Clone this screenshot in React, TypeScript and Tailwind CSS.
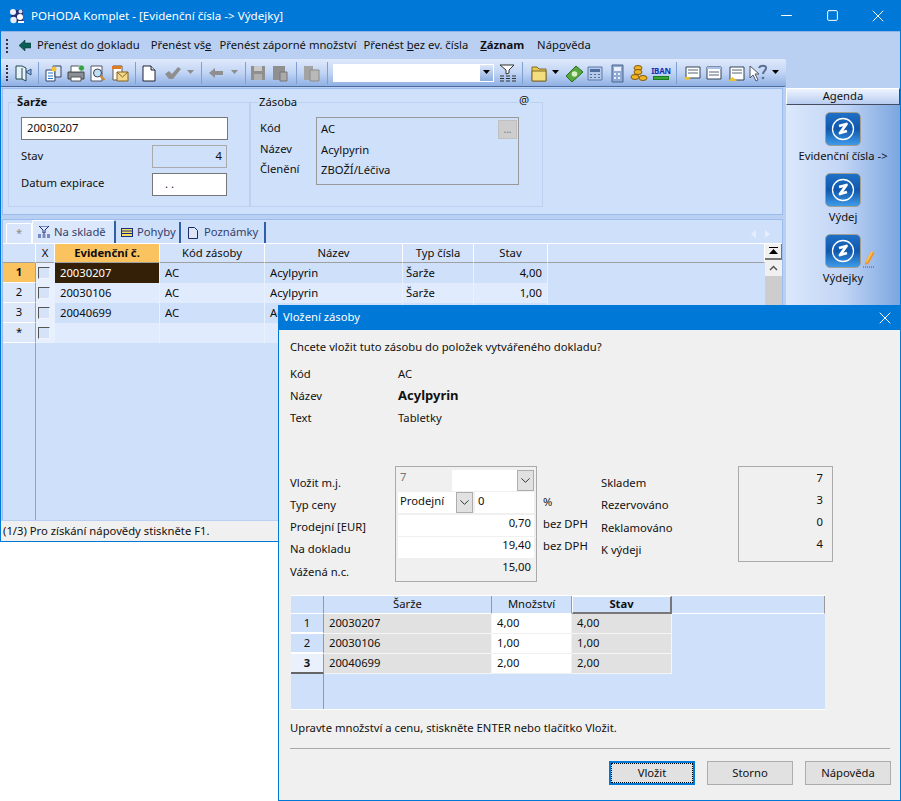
import type { ReactNode } from 'react'
import { ChevronDown, Minus, Square, X } from 'lucide-react'

const sep = <div className="w-px h-[22px] mx-[4px] bg-[#f4f8ff] border-l border-[#7f9fd0]" />

function Ic({ w = 22, children }: { w?: number; children: ReactNode }) {
  return (
    <svg width={w} height="20" viewBox={`0 0 ${w} 20`} className="shrink-0">
      {children}
    </svg>
  )
}

function Caret({ color = '#000' }: { color?: string }) {
  return (
    <svg width="9" height="5" viewBox="0 0 9 5" className="shrink-0 mx-[2px]">
      <path d="M1 0h7L4.500 4z" fill={color} />
    </svg>
  )
}

function ZIcon() {
  return (
    <div className="w-[36px] h-[34px] rounded-[5px] border border-[#a09f92] bg-gradient-to-b from-[#1f70c6] via-[#1058ad] to-[#3f9be8] flex items-center justify-center">
      <svg width="26" height="26" viewBox="0 0 26 26">
        <circle cx="13" cy="13" r="10.500" fill="none" stroke="#fff" strokeWidth="1.300" />
        <path d="M9 10l7.500-2L10 17l7-2" fill="none" stroke="#fff" strokeWidth="2.800" strokeLinejoin="round" />
      </svg>
    </div>
  )
}

function Group({ title, bold, className, children }: { title: string; bold?: boolean; className: string; children: ReactNode }) {
  return (
    <fieldset className={`border border-[#bcd0f0] h-[110px] ${className}`}>
      <legend className={`ml-[7px] px-[1px] leading-[10px] ${bold ? 'font-bold' : ''}`}>{title}</legend>
      {children}
    </fieldset>
  )
}

const stockRows = [
  { n: '1', code: '20030207', stav: '4,00' },
  { n: '2', code: '20030106', stav: '1,00' },
  { n: '3', code: '20040699', stav: '' },
  { n: '*', code: '', stav: '' },
]

function StockGrid() {
  const head = 'h-[19px] bg-[#d3e2fb] border-r border-b border-r-white border-b-[#a0a0a0] flex items-center justify-center'
  return (
    <div className="flex-1 bg-[#cfe0fa] flex text-[#0d0d0d]">
      <div className="w-[762px]">
        <div className="grid grid-cols-[33px_19px_105px_105px_138px_71px_74px_1fr]">
          <div className={head} />
          <div className={head}>X</div>
          <div className="h-[19px] bg-[#fbc35f] border-r border-b border-r-white border-b-[#a0a0a0] flex items-center justify-center font-bold">Evidenční č.</div>
          <div className={head}>Kód zásoby</div>
          <div className={head}>Název</div>
          <div className={head}>Typ čísla</div>
          <div className={head}>Stav</div>
          <div className={head} />
          {stockRows.map((r, i) => {
            const cellBg = i % 2 === 0 ? 'bg-[#cfe0fa]' : 'bg-[#e0ebfd]'
            const cell = `h-[20px] ${cellBg} border-r border-[#eaf1fd] flex items-center pl-[5px]`
            const filled = r.n !== '*'
            return (
              <div key={r.n} className="contents">
                <div className={`h-[20px] ${i === 0 ? 'bg-[#fbc35f] font-bold' : 'bg-[#dde9fb]'} border-b border-r border-b-white border-r-[#a0a0a0] flex items-center justify-center`}>{r.n}</div>
                <div className="h-[20px] flex items-center pl-[2px] bg-[#e8f0fd]">
                  <div className="w-[12px] h-[12px] border border-[#eef3fc] border-l-[#555] border-t-[#555] bg-[#d5e2f8]" />
                </div>
                <div className={`${cell} ${i === 0 ? '!bg-[#342006] text-white' : ''}`}>{r.code}</div>
                <div className={cell}>{filled ? 'AC' : ''}</div>
                <div className={cell}>{filled ? 'Acylpyrin' : ''}</div>
                <div className={`${cell} !pl-[3px]`}>{filled ? 'Šarže' : ''}</div>
                <div className={`${cell} justify-end pr-[5px]`}>{r.stav}</div>
                <div />
              </div>
            )
          })}
        </div>
        <div className="h-[177px] w-[33px] border-r border-[#a0a0a0]" />
      </div>
      <div className="flex-1 bg-[#f0f0f0] flex flex-col">
        <div className="h-[16px] bg-[#f0f0f0] border-b-2 border-r border-[#777] flex items-center justify-center">
          <svg width="9" height="8" viewBox="0 0 9 8"><path d="M0 0h9v1H0zM4.500 2L9 7H0z" /></svg>
        </div>
        <div className="h-[16px] flex items-center justify-center">
          <svg width="9" height="6" viewBox="0 0 9 6"><path d="M1 5l3.500-3.500L8 5" fill="none" stroke="#555" strokeWidth="1.500" /></svg>
        </div>
        <div className="flex-1 bg-[#cdcdcd]" />
      </div>
    </div>
  )
}

function MainWindow() {
  return (
    <div className="w-[901px] h-[542px] border border-[#0078d7] border-t-0 flex flex-col bg-[#b9d0f3]">
      {/* title bar */}
      <div className="h-[31px] -mx-px bg-[#0078d7] text-white flex items-center shrink-0">
        <svg width="16" height="16" viewBox="0 0 16 16" className="ml-[9px] mr-[6px]">
          <path d="M2 2h12v12H2z" fill="#26306e" />
          <circle cx="4" cy="4" r="3" fill="#eef2fb" />
          <circle cx="11.500" cy="3.500" r="2" fill="#cfdcf5" />
          <circle cx="4.500" cy="12" r="3.200" fill="#e4eaf8" />
          <circle cx="11" cy="9" r="3" fill="#fff" />
          <path d="M9 13h6v2H9z" fill="#fff" />
        </svg>
        <span className="text-[11.6px]">POHODA Komplet - [Evidenční čísla -&gt; Výdejky]</span>
        <div className="ml-auto flex items-center">
          <div className="w-[46px] flex justify-center"><Minus size={17} strokeWidth={1} absoluteStrokeWidth /></div>
          <div className="w-[46px] flex justify-center"><Square size={13} strokeWidth={1} absoluteStrokeWidth /></div>
          <div className="w-[46px] flex justify-center"><X size={20} strokeWidth={1} absoluteStrokeWidth /></div>
        </div>
      </div>
      {/* menu */}
      <div className="h-[28px] shrink-0 flex items-center border-t border-[#8fb4e8]">
        <div className="ml-[5px] w-[2px] h-[14px] border-l-2 border-dotted border-[#334]" />
        <svg width="12" height="11" viewBox="0 0 12 11" className="ml-[11px] mr-[6px]"><path d="M0 5.500L6 0v3h6v5H6v3z" fill="#0b5d57" stroke="#0a2c2a" strokeWidth=".5" /></svg>
        <div className="flex text-[#111]">
          <span className="mr-[11px]">Přenést do <u>d</u>okladu</span>
          <span className="mr-[8px]">Přenést vš<u>e</u></span>
          <span className="mr-[7px]">Přenést záporné množství</span>
          <span className="mr-[12px]">Přenést <u>b</u>ez ev. čísla</span>
          <span className="mr-[13px] font-bold"><u>Z</u>áznam</span>
          <span>Náp<u>o</u>věda</span>
        </div>
      </div>
      {/* toolbar */}
      <div className="h-[28px] w-[785px] shrink-0 rounded-r-[2px] bg-gradient-to-b from-[#dfe9fb] via-[#c2d5f5] to-[#8fb0e4] border-b border-[#4c6a9c] flex items-center">
        <div className="ml-[5px] mr-[6px] w-[2px] h-[16px] border-l-2 border-dotted border-[#334]" />
        <Ic w={20}><path d="M2 3h6l4 2v13l-4-2H2zM8 5v11" fill="#e8f0fc" stroke="#1f4a4a" /><path d="M12 9l5-3v6z" fill="#8fb4ee" stroke="#33527f" /></Ic>
        {sep}
        <Ic><path d="M3 7h9v11H3z" fill="#fff" stroke="#346" /><path d="M10 3h8v11h-6V7h-2z" fill="#dde8fa" stroke="#346" /><path d="M5 10h5M5 13h5M5 15.500h5" stroke="#27c" /><circle cx="11" cy="6" r="2.500" fill="#f2c230" /></Ic>
        <Ic><path d="M3 9h16v7H3z" fill="#8a8f98" stroke="#444" /><path d="M6 3h10v6H6zM6 14h10v4H6z" fill="#fff" stroke="#555" /><circle cx="16.500" cy="5" r="3" fill="#35a04a" stroke="#fff" strokeWidth=".5" /></Ic>
        <Ic><path d="M4 3h11v15H4z" fill="#fff" stroke="#556" /><circle cx="10.500" cy="10" r="4" fill="#bfe0f5" stroke="#345" /><path d="M13.500 13l4 4" stroke="#c8892a" strokeWidth="2.200" /></Ic>
        <Ic><path d="M4 3h9v14H4z" fill="#fff" stroke="#654" /><path d="M3 3h9v3H3z" fill="#e07a20" /><path d="M8 9h11v9H8z" fill="#f5d98a" stroke="#86631f" /><path d="M8 9l5.500 5 5.500-5" fill="none" stroke="#86631f" /></Ic>
        {sep}
        <Ic><path d="M3 3h8l4 4v11H3z" fill="#fff" stroke="#223" /><path d="M11 3v4h4" fill="#cde" stroke="#223" /></Ic>
        <Ic><path d="M3 11l4-3 3 3 6-7 3 2-8 10H7z" fill="#8f8f8f" /></Ic>
        <Caret color="#8d8d8d" />
        {sep}
        <Ic><path d="M3 10l6-5v3h8v4H9v3z" fill="#8f8f8f" /></Ic>
        <Caret color="#8d8d8d" />
        {sep}
        <Ic><path d="M1 3h14v14H1z" fill="#8f8f8f" /><path d="M4 3h8v5H4z" fill="#c9c9c9" /><path d="M4 11h8v6H4z" fill="#b0b0b0" /></Ic>
        <Ic w={20}><path d="M1 3h12v14H1z" fill="#8f8f8f" /><path d="M8 9h7v9H8z" fill="#aaa" stroke="#777" /></Ic>
        {sep}
        <Ic><path d="M3 3h9v14H3z" fill="#a3a3a3" /><path d="M9 7h9v11H9z" fill="#b9b9b9" stroke="#8a8a8a" /></Ic>
        {sep}
        <div className="w-[161px] h-[18px] ml-px bg-white flex justify-end">
          <div className="w-[13px] h-[16px] m-px bg-gradient-to-b from-[#dce7f9] to-[#8dadde] flex items-center justify-center"><Caret /></div>
        </div>
        <div className="ml-[4px]"><Ic w={20}><path d="M2 2h14l-5 5v3l-3 1V7z" fill="#fff" stroke="#333" /><path d="M2 13h4M8 13h4M14 13h4M2 15.500h4M8 15.500h4M14 15.500h4M2 18h4M8 18h4M14 18h4" stroke="#333" /></Ic></div>
        {sep}
        <Ic><path d="M5 4h5l2 2h7v12H5z" fill="#e9c94d" stroke="#7d6a2a" /><path d="M5 8h14v10H5z" fill="#f4dd7f" stroke="#7d6a2a" /></Ic>
        <Caret />
        <Ic><path d="M4 13L14 3l7 6-11 10z" fill="#55a83c" stroke="#2e6b22" /><circle cx="12.500" cy="11" r="2.800" fill="#d9f0c5" /></Ic>
        <Ic><path d="M4 4h14v13H4z" fill="#b7c9e8" stroke="#5a78a8" /><path d="M6 6h10v3H6zM6 11h2v1H6zM10 11h2v1h-2zM14 11h2v1h-2zM6 14h2v1H6zM10 14h2v1h-2zM14 14h2v1h-2z" fill="#4f6fa0" /></Ic>
        <Ic><path d="M6 2h11v17H6z" fill="#8fa9d2" stroke="#4b6690" /><path d="M8 4h7v4H8zM8 10h2v2H8zM12 10h2v2h-2zM8 14h2v2H8zM12 14h2v2h-2z" fill="#eaf0fb" /></Ic>
        <Ic><ellipse cx="10" cy="5" rx="4" ry="2.500" fill="#f0b429" stroke="#8a5a00" /><ellipse cx="10" cy="9" rx="4" ry="2.500" fill="#f0b429" stroke="#8a5a00" /><ellipse cx="7" cy="14" rx="4" ry="2.500" fill="#f0b429" stroke="#8a5a00" /><ellipse cx="15" cy="15" rx="4" ry="2.500" fill="#f0b429" stroke="#8a5a00" /></Ic>
        <div className="w-[22px] flex flex-col items-center text-[#1530b0] text-[8px] font-bold leading-[9px] tracking-tight">
          IBAN
          <div className="w-[16px] h-[4px] mt-px bg-[#3aa63a] border border-[#1c7a1c]" />
        </div>
        {sep}
        <Ic><path d="M5 4h14v11H5z" fill="#fff" stroke="#345" /><path d="M7 7h10M7 10h10" stroke="#567" /><path d="M3 14h7l-3.500 4z" fill="#e9c22d" /></Ic>
        <Ic><path d="M4 4h14v12H4z" fill="#fff" stroke="#345" /><path d="M4 4h14v2H4z" fill="#a9c1e8" /><path d="M6 9h10M6 12h10" stroke="#567" /></Ic>
        <Ic><path d="M5 4h14v13H5z" fill="#fff" stroke="#345" /><path d="M7 7h10M7 10h10" stroke="#567" /><path d="M3 18h9l-4.500-4z" fill="#e9c22d" /></Ic>
        <Ic><path d="M3 3l9 8H8l3 6-2 1-3-6-3 3z" fill="#fff" stroke="#556" /><path d="M12 5c1-3 7-3 7 0 0 3-3 3-3 6" fill="none" stroke="#5c6f92" strokeWidth="2" /><circle cx="16" cy="15" r="1.300" fill="#5c6f92" /></Ic>
        <Caret />
      </div>
      {/* body */}
      <div className="flex-1 flex min-h-0 bg-[#b9d0f3]">
        <div className="w-[784px] flex flex-col pl-px pr-[2px] pt-px">
          <div className="h-[127px] shrink-0 bg-[#cfe0fa] border border-[#9dbcee] pl-[5px] pt-[8px] flex">
            <Group title="Šarže" bold className="w-[242px]">
              <div className="pl-[12px] pt-[10px]">
                <div className="h-[23px] w-[207px] bg-white border border-[#777] flex items-center pl-[5px]">20030207</div>
                <div className="mt-[5px] flex items-center justify-between w-[206px]">
                  <span>Stav</span>
                  <div className="w-[75px] h-[23px] border border-[#aaa] flex items-center justify-end pr-[4px]">4</div>
                </div>
                <div className="mt-[5px] flex items-center justify-between w-[206px]">
                  <span className="-translate-y-px">Datum expirace</span>
                  <div className="w-[75px] h-[23px] bg-white border border-[#777] flex items-center pl-[12px]">. .</div>
                </div>
              </div>
            </Group>
            <div className="relative">
              <Group title="Zásoba" className="w-[293px]">
                <div className="flex pl-[9px] pt-[10px]">
                  <div className="w-[56px]">
                    <div className="h-[22px] leading-[22px]">Kód</div>
                    <div className="h-[20px] leading-[20px]">Název</div>
                    <div className="h-[20px] leading-[20px]">Členění</div>
                  </div>
                  <div className="relative w-[203px] h-[68px] border border-[#999] pl-[4px]">
                    <div className="h-[22px] leading-[22px]">AC</div>
                    <div className="h-[20px] leading-[20px]">Acylpyrin</div>
                    <div className="h-[20px] leading-[20px]">ZBOŽÍ/Léčiva</div>
                    <div className="absolute right-px top-[2px] w-[19px] h-[19px] bg-[#cdcdcd] border border-[#c0c0c0] flex items-center justify-center text-[#777] text-[10px]">...</div>
                  </div>
                </div>
              </Group>
              <span className="absolute right-[13px] -top-[5px] bg-[#cfe0fa] px-px">@</span>
            </div>
          </div>
          <div className="h-[301px] mt-[4px] shrink-0 bg-[#cfe0fa] border border-[#9dbcee] flex flex-col">
            <div className="h-[24px] shrink-0 flex items-end pl-[3px] relative border-b border-white">
              <div className="w-[26px] h-[20px] border border-white border-b-0 rounded-t-[2px] bg-[#d8e5fb] flex items-center justify-center text-[#8a8a8a]">*</div>
              <div className="w-[84px] h-[23px] bg-[#dbe7fb] border border-white border-r-2 border-r-[#2f5fa8] border-b-0 rounded-t-[2px] flex items-center pl-[5px] gap-[4px]">
                <svg width="12" height="12" viewBox="0 0 12 12"><path d="M1 0h10L7 4v3H5V4zM0 9h3M4.500 9h3M9 9h3M0 11h3M4.500 11h3M9 11h3" fill="none" stroke="#1a2a8a" /></svg>
                <span className="text-[#33416c]">Na skladě</span>
              </div>
              <div className="w-[65px] h-[21px] border-r-2 border-[#2f5fa8] flex items-center pl-[5px] gap-[4px]">
                <svg width="12" height="9" viewBox="0 0 12 9"><path d="M0 0h12v9H0z" fill="#f2e15a" /><path d="M0 .5h12M0 3h12M0 5.500h12M0 8.500h12M.5 0v9M11.500 0v9" stroke="#1a2a8a" /></svg>
                <span className="text-[#33416c]">Pohyby</span>
              </div>
              <div className="w-[85px] h-[21px] border-r-2 border-[#2f5fa8] flex items-center pl-[7px] gap-[6px]">
                <svg width="10" height="12" viewBox="0 0 10 12"><path d="M.5.5h6l3 3v8H.5z" fill="#dfe4f5" stroke="#1a2a6a" /></svg>
                <span className="text-[#33416c]">Poznámky</span>
              </div>
              <div className="ml-auto mr-[12px] mb-[5px] flex gap-[9px]">
                <svg width="5" height="8" viewBox="0 0 5 8"><path d="M5 0v8L0 4z" fill="#e6eefc" /></svg>
                <svg width="5" height="8" viewBox="0 0 5 8"><path d="M0 0v8l5-4z" fill="#e6eefc" /></svg>
              </div>
            </div>
            <StockGrid />
          </div>
          <div className="flex-1 -ml-px -mr-[2px] mt-px bg-[#f0f0f0] flex items-center pl-[2px] text-[#111]">(1/3) Pro získání nápovědy stiskněte F1.</div>
        </div>
        <div className="w-[114px] ml-px mt-px bg-gradient-to-r from-[#dbe8fc] via-[#c2d5f5] to-[#7ba6e0] flex flex-col items-center">
          <div className="w-full h-[17px] border border-[#444c60] border-l-white border-t-white bg-gradient-to-b from-[#eef4fe] to-[#b9cdf0] flex items-center justify-center text-[#111]">Agenda</div>
          <div className="mt-[7px]"><ZIcon /></div>
          <div className="mt-[2px] text-[#111]">Evidenční čísla -&gt;</div>
          <div className="mt-[8px]"><ZIcon /></div>
          <div className="mt-[2px] text-[#111]">Výdej</div>
          <div className="mt-[8px] relative">
            <ZIcon />
            <svg width="12" height="18" viewBox="0 0 12 18" className="absolute -right-[14px] bottom-0">
              <path d="M8.500 1l3 2-6 10.500-3.500 1.500.5-4z" fill="#f0902a" />
              <path d="M8.500 1l1.500 1-6 10.500-1.500-.5z" fill="#f9c74f" />
              <path d="M0 17h12" stroke="#555" strokeDasharray="1 1" />
            </svg>
          </div>
          <div className="mt-[2px] text-[#111]">Výdejky</div>
        </div>
      </div>
    </div>
  )
}

const lots = [
  { n: '1', lot: '20030207', qty: '4,00' },
  { n: '2', lot: '20030106', qty: '1,00' },
  { n: '3', lot: '20040699', qty: '2,00' },
]

function LotGrid() {
  const head = 'h-[18px] bg-[#cfe0fa] border-r border-b border-r-[#999] border-b-white flex items-center justify-center'
  return (
    <div className="mt-[12px] ml-[12px] w-[534px] h-[115px] bg-[#cfe0fa] border-t border-b border-white flex flex-col text-[#111]">
      <div className="grid grid-cols-[33px_168px_80px_100px_1fr]">
        <div className={head} />
        <div className={head}>Šarže</div>
        <div className={head}>Množství</div>
        <div className="h-[18px] bg-[#cfe0fa] border border-white border-r-2 border-b-2 border-r-[#777] border-b-[#777] flex items-center justify-center font-bold">Stav</div>
        <div className={head} />
        {lots.map((r) => (
          <div key={r.n} className="contents">
            <div className={`h-[20px] border-r border-b-2 border-r-[#999] ${r.n === '3' ? 'bg-[#eaf1fd] border-b-[#666] font-bold' : 'border-b-white'} flex items-center justify-center`}>{r.n}</div>
            <div className="h-[20px] bg-[#e1e1e1] border-b border-r border-[#f5f5f5] flex items-center pl-[5px]">{r.lot}</div>
            <div className="h-[20px] bg-white border-b border-r border-[#f0f0f0] flex items-center pl-[5px]">{r.qty}</div>
            <div className="h-[20px] bg-[#e1e1e1] border-b border-r border-[#f5f5f5] flex items-center pl-[5px]">{r.qty}</div>
            <div />
          </div>
        ))}
      </div>
      <div className="flex-1 w-[33px] border-r border-[#999]" />
    </div>
  )
}

function Dropdown() {
  return (
    <div className="w-[17px] h-[21px] bg-[#e1e1e1] border border-[#adadad] flex items-center justify-center shrink-0">
      <ChevronDown size={15} strokeWidth={1} absoluteStrokeWidth color="#333" />
    </div>
  )
}

function InsertDialog() {
  const rowLabel = 'h-[22px] flex items-center'
  return (
    <div className="absolute left-[278px] top-[305px] w-[623px] h-[496px] bg-[#f0f0f0] border border-[#0078d7] flex flex-col text-[#111]">
      <div className="h-[25px] -mx-px -mt-px bg-[#0078d7] text-white flex items-center pl-[5px] pr-[6px] justify-between shrink-0">
        <span>Vložení zásoby</span>
        <X size={20} strokeWidth={1} absoluteStrokeWidth />
      </div>
      <div className="pl-[11px] h-[26px] flex items-center mt-[4px] shrink-0">Chcete vložit tuto zásobu do položek vytvářeného dokladu?</div>
      <div className="pl-[11px] mt-[3px] shrink-0">
        <div className="flex h-[22px] items-center"><span className="w-[108px]">Kód</span><span>AC</span></div>
        <div className="flex h-[22px] items-center"><span className="w-[108px]">Název</span><span className="font-bold text-[13px]">Acylpyrin</span></div>
        <div className="flex h-[22px] items-center"><span className="w-[108px]">Text</span><span>Tabletky</span></div>
      </div>
      <div className="flex pl-[11px] mt-[37px] shrink-0">
        <div className="w-[105px] pt-[6px]">
          <div className={rowLabel}>Vložit m.j.</div>
          <div className={rowLabel}>Typ ceny</div>
          <div className={rowLabel}>Prodejní [EUR]</div>
          <div className={rowLabel}>Na dokladu</div>
          <div className={`${rowLabel} mt-px`}>Vážená n.c.</div>
        </div>
        <div className="w-[142px] h-[116px] border border-[#aaa] px-[2px] pt-[3px]">
          <div className="flex h-[21px] pl-[2px] text-[#777]">
            <span className="w-[52px] leading-[14px]">7</span>
            <div className="flex-1 bg-white flex justify-end"><Dropdown /></div>
          </div>
          <div className="flex h-[21px] mt-px gap-[2px]">
            <div className="w-[75px] bg-white flex items-center justify-between pl-[2px]"><span className="-translate-y-px">Prodejní</span><Dropdown /></div>
            <div className="flex-1 bg-white flex items-center pl-[3px] pb-[3px]">0</div>
          </div>
          <div className="h-[21px] mt-[2px] bg-white flex items-center justify-end pr-[3px] pb-[4px]">0,70</div>
          <div className="h-[21px] mt-px bg-white flex items-center justify-end pr-[3px] pb-[4px]">19,40</div>
          <div className="h-[19px] flex items-center justify-end pr-[3px]">15,00</div>
        </div>
        <div className="w-[58px] ml-[6px] pt-[25px]">
          <div className="h-[22px] flex items-center">%</div>
          <div className="h-[22px] flex items-center">bez DPH</div>
          <div className="h-[22px] flex items-center">bez DPH</div>
        </div>
        <div className="w-[137px] pt-[6px]">
          <div className={rowLabel}>Skladem</div>
          <div className={rowLabel}>Rezervováno</div>
          <div className={`${rowLabel} mt-px`}>Reklamováno</div>
          <div className={rowLabel}>K výdeji</div>
        </div>
        <div className="w-[95px] h-[96px] border border-[#aaa] pr-[9px] text-right">
          <div className="h-[22px] leading-[22px]">7</div>
          <div className="h-[22px] leading-[22px]">3</div>
          <div className="h-[22px] leading-[22px]">0</div>
          <div className="h-[22px] leading-[22px]">4</div>
        </div>
      </div>
      <LotGrid />
      <div className="pl-[11px] mt-[8px] h-[20px] flex items-center shrink-0">Upravte množství a cenu, stiskněte ENTER nebo tlačítko Vložit.</div>
      <div className="ml-[11px] mr-[10px] mt-[10px] border-t border-[#a9a9a9]" />
      <div className="flex justify-end gap-[12px] pr-[9px] mt-[12px]">
        <div className="w-[86px] h-[24px] bg-[#e1e1e1] border-2 border-[#0078d7] flex items-center justify-center outline-1 -outline-offset-3 outline-dotted outline-black">Vložit</div>
        <div className="w-[86px] h-[24px] bg-[#e1e1e1] border border-[#adadad] flex items-center justify-center">Storno</div>
        <div className="w-[86px] h-[24px] bg-[#e1e1e1] border border-[#adadad] flex items-center justify-center">Nápověda</div>
      </div>
    </div>
  )
}

export default function App() {
  return (
    <div className="relative w-[901px] h-[801px] overflow-hidden bg-white font-['Noto_Sans',sans-serif] text-[11.25px] text-[#111]">
      <MainWindow />
      <InsertDialog />
    </div>
  )
}
